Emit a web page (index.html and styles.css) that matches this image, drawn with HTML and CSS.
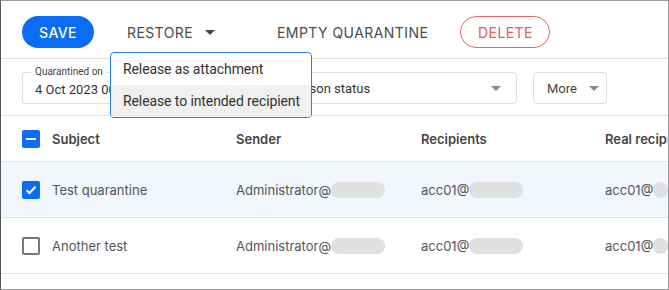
FILE: index.html
```html
<!DOCTYPE html>
<html lang="en">
<head>
    <meta charset="UTF-8">
    <title>Quarantine</title>
    <link rel="stylesheet" href="styles.css">
</head>
<body>
    <div class="frame">
        <div class="toolbar">
            <button class="btn btn-save">SAVE</button>
            <div class="restore">
                <button class="btn btn-text btn-restore">RESTORE <span class="caret caret-dark"></span></button>
                <!-- Open restore menu -->
                <div class="menu">
                    <div class="menu-item">Release as attachment</div>
                    <div class="menu-item hover">Release to intended recipient</div>
                </div>
            </div>
            <button class="btn btn-text btn-empty">EMPTY QUARANTINE</button>
            <button class="btn btn-delete">DELETE</button>
        </div>

        <div class="filters">
            <div class="field field-date">
                <span class="field-label">Quarantined on</span>
                <span class="field-value">4 Oct 2023 00:00 - 5 Oct 2023</span>
            </div>
            <div class="field field-status">
                <span class="field-value">Quarantine reason status</span>
                <span class="caret"></span>
            </div>
            <div class="field field-more">
                <span class="field-value">More</span>
                <span class="caret"></span>
            </div>
        </div>

        <div class="grid">
            <div class="row head">
                <div class="cell check"><span class="box box-partial"></span></div>
                <div class="cell">Subject</div>
                <div class="cell">Sender</div>
                <div class="cell">Recipients</div>
                <div class="cell">Real recipients</div>
            </div>
            <div class="row selected">
                <div class="cell check">
                    <span class="box box-checked">
                        <svg width="12" height="10" viewBox="0 0 12 10"><path d="M1.5 5.2 L4.5 8 L10.5 1.8" fill="none" stroke="#fff" stroke-width="2"/></svg>
                    </span>
                </div>
                <div class="cell">Test quarantine</div>
                <div class="cell">Administrator@<span class="blur"></span></div>
                <div class="cell">acc01@<span class="blur"></span></div>
                <div class="cell">acc01@<span class="blur"></span></div>
            </div>
            <div class="row">
                <div class="cell check"><span class="box"></span></div>
                <div class="cell">Another test</div>
                <div class="cell">Administrator@<span class="blur"></span></div>
                <div class="cell">acc01@<span class="blur"></span></div>
                <div class="cell">acc01@<span class="blur"></span></div>
            </div>
        </div>
    </div>
</body>
</html>
```

FILE: styles.css
```css
body {
    margin: 0;
    background: #fff;
}
.frame {
    width: 667px;
    height: 288px;
    border: 1px solid #9a9a9a;
    border-left-color: #555;
    overflow: hidden;
    font-family: Inter, "Open Sans", sans-serif;
    color: #4a4a4a;
}

/* toolbar */
.toolbar {
    display: flex;
    align-items: flex-start;
    height: 42px;
    padding: 15px 0 0 21px;
    border-bottom: 1px solid #e0e0e0;
}
.btn {
    font-family: inherit;
    font-size: 14px;
    font-weight: 500;
    letter-spacing: 0.4px;
    height: 32px;
    border-radius: 16px;
    border: none;
    background: none;
    cursor: pointer;
    padding: 0;
}
.btn-save {
    width: 72px;
    background: #0b6df6;
    color: #fff;
}
.restore {
    position: relative;
    margin-left: 17px;
}
.btn-text {
    color: #4a4a4a;
    font-weight: 400;
}
.btn-restore {
    padding: 0 16px;
    display: flex;
    align-items: center;
}
.btn-restore .caret {
    margin-left: 12px;
}
.btn-empty {
    margin-left: 46px;
    letter-spacing: 0.45px;
}
.btn-delete {
    margin-left: 32px;
    width: 90px;
    border: 1px solid #e8646a;
    color: #e45a62;
    font-weight: 400;
}
.caret {
    display: inline-block;
    width: 0;
    height: 0;
    border-left: 5px solid transparent;
    border-right: 5px solid transparent;
    border-top: 5px solid #888;
}
.caret-dark {
    border-top-color: #444;
}

/* restore dropdown */
.menu {
    position: absolute;
    top: 36px;
    left: -1px;
    width: 200px;
    background: #fff;
    border: 1px solid #2a7ef0;
    border-radius: 4px;
    font-family: Roboto, sans-serif;
    font-size: 14px;
    letter-spacing: -0.1px;
    color: #333;
    z-index: 5;
    overflow: hidden;
}
.menu-item {
    height: 32px;
    line-height: 32px;
    padding-left: 12px;
    white-space: nowrap;
}
.menu-item.hover {
    background: #f0f0f0;
}

/* filters */
.filters {
    display: flex;
    height: 43px;
    padding: 13px 0 0 21px;
    border-bottom: 1px solid #e0e0e0;
    font-family: Roboto, sans-serif;
}
.field {
    position: relative;
    display: flex;
    align-items: center;
    height: 30px;
    border: 1px solid #dedede;
    border-radius: 4px;
    font-size: 13px;
    color: #333;
    white-space: nowrap;
}
.field-date {
    width: 160px;
    padding-left: 12px;
}
.field-label {
    position: absolute;
    top: -7px;
    left: 8px;
    padding: 0 4px;
    background: #fff;
    font-size: 10px;
    line-height: 12px;
    color: #444;
}
.field-date .field-value {
    margin-top: 2px;
}
.field-status {
    margin-left: 10px;
    width: 291px;
    padding-left: 18px;
    justify-content: space-between;
}
.field-status .caret {
    margin-right: 15px;
}
.field-more {
    margin-left: 16px;
    width: 59px;
    padding-left: 13px;
    color: #444;
}
.field-more .caret {
    margin-left: 12px;
}

/* table */
.row {
    display: grid;
    grid-template-columns: 51px 184px 185px 184px 1fr;
    height: 55px;
    align-items: center;
    border-bottom: 1px solid #e3e3e3;
    font-size: 13px;
    color: #555;
    white-space: nowrap;
}
.row.head {
    height: 45px;
    font-weight: 600;
    color: #444;
}
.row.selected {
    background: #f2f6fd;
}
.cell {
    display: flex;
    align-items: center;
    overflow: hidden;
}
.check {
    padding-left: 21px;
}
.box {
    box-sizing: border-box;
    width: 18px;
    height: 18px;
    border: 2px solid #777;
    border-radius: 2px;
    display: flex;
    align-items: center;
    justify-content: center;
}
.box-checked, .box-partial {
    background: #0b6df6;
    border: none;
}
.box-partial::after {
    content: "";
    width: 10px;
    height: 2px;
    background: #fff;
}
.blur {
    display: inline-block;
    width: 54px;
    height: 16px;
    border-radius: 8px;
    background: #e0e0e0;
}
```
